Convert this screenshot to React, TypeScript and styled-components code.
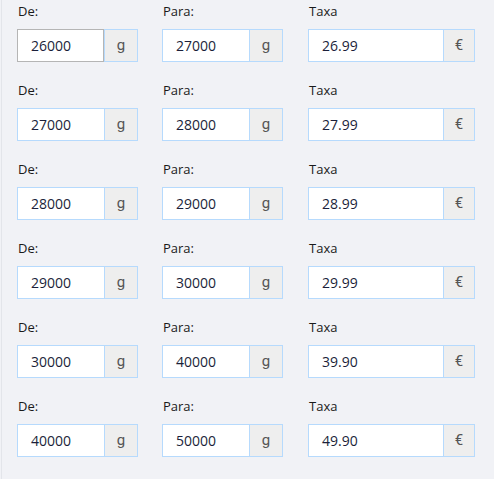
import React from "react";
import styled, { createGlobalStyle } from "styled-components";

const Global = createGlobalStyle`
  html, body { margin: 0; padding: 0; background: #f1f2f6; }
  body { font-family: "Open Sans", "Noto Sans", Arial, sans-serif; }
`;

const Page = styled.div`
  margin-left: 1px;
  border-left: 1px solid #e3e5ea;
  min-height: 479px;
  box-sizing: border-box;
  padding: 2px 0 0 15px;
  display: flex;
  flex-direction: column;
  gap: 19px;
`;

const Row = styled.div`
  display: grid;
  grid-template-columns: 121px 121px 168px;
  column-gap: 24px;
`;

const Field = styled.div<{ $shift?: number }>`
  display: flex;
  flex-direction: column;
  gap: 9px;
  margin-left: ${(p) => p.$shift ?? 0}px;
`;

const Label = styled.label`
  font-size: 13px;
  line-height: 18px;
  color: #1a1a1a;
  padding-left: 1px;
`;

const Group = styled.div`
  display: flex;
  height: 33px;
`;

const Input = styled.div<{ $grey?: boolean }>`
  flex: 1;
  box-sizing: border-box;
  background: #fff;
  border: 1px solid ${(p) => (p.$grey ? "#b5b5b5" : "#b6dafd")};
  border-right: ${(p) => (p.$grey ? "1px solid #b5b5b5" : "none")};
  padding-left: 13px;
  font-size: 14px;
  line-height: 31px;
  color: #1b1f3a;
`;

const Addon = styled.div<{ $w: number }>`
  width: ${(p) => p.$w}px;
  box-sizing: border-box;
  background: #eeeeee;
  border: 1px solid #b6dafd;
  display: flex;
  align-items: center;
  justify-content: center;
  font-family: Roboto, "DejaVu Sans", sans-serif;
  font-size: 15px;
  padding-bottom: 1px;
  color: #555;
`;

const rows = [
  ["26000", "27000", "26.99"],
  ["27000", "28000", "27.99"],
  ["28000", "29000", "28.99"],
  ["29000", "30000", "29.99"],
  ["30000", "40000", "39.90"],
  ["40000", "50000", "49.90"],
];

export default function App() {
  return (
    <>
      <Global />
      <Page>
        {rows.map((r, i) => (
          <Row key={i}>
            <Field>
              <Label>De:</Label>
              <Group>
                <Input $grey={i === 0}>{r[0]}</Input>
                <Addon $w={34}>g</Addon>
              </Group>
            </Field>
            <Field>
              <Label>Para:</Label>
              <Group>
                <Input>{r[1]}</Input>
                <Addon $w={34}>g</Addon>
              </Group>
            </Field>
            <Field $shift={1}>
              <Label>Taxa</Label>
              <Group>
                <Input>{r[2]}</Input>
                <Addon $w={32}>€</Addon>
              </Group>
            </Field>
          </Row>
        ))}
      </Page>
    </>
  );
}
